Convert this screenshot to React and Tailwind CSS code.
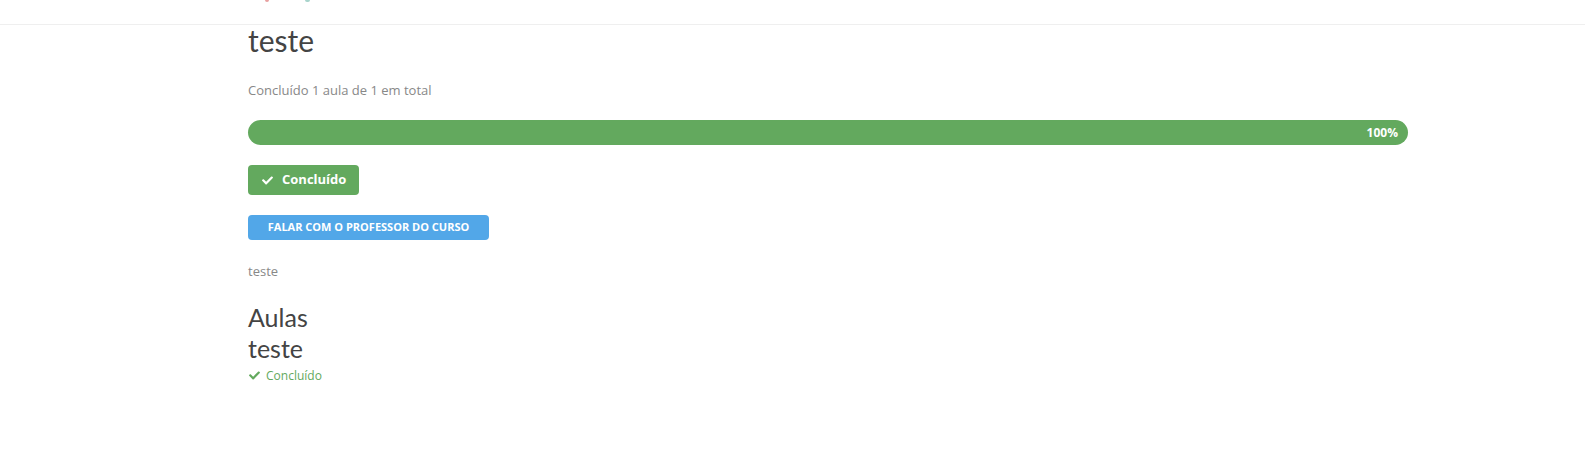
import React from "react";
import { FaCheck } from "react-icons/fa";

const heading = { fontFamily: "Lato, 'Open Sans', sans-serif" };
const body = { fontFamily: "'Open Sans', 'Liberation Sans', sans-serif" };

export default function App() {
  return (
    <div className="min-h-[457px] w-full bg-white" style={body}>
      {/* top navigation bar (scrolled, only its lower edge is visible) */}
      <header className="h-[25px] border-b border-[#efefef] bg-white">
        <div className="flex items-start pl-[265px]">
          <span className="block h-[2px] w-[4px] rounded-b-full bg-[#e8a0a0]" />
          <span className="ml-[36px] block h-[2px] w-[5px] rounded-b-full bg-[#a8d4cc]" />
        </div>
      </header>

      <main className="ml-[248px] w-[1160px]">
        <h1
          className="text-[30px] leading-[30px] font-normal text-[#444]"
          style={heading}
        >
          teste
        </h1>

        <p className="mt-[25px] text-[13px] leading-[20px] text-[#888]">
          Concluído 1 aula de 1 em total
        </p>

        <div className="mt-[20px] flex h-[25px] w-full items-center justify-end rounded-full bg-[#63a95e] pr-[10px]">
          <span className="text-[12px] font-bold text-white">100%</span>
        </div>

        <button className="mt-[20px] flex h-[30px] w-[111px] items-center gap-[9px] rounded-[4px] bg-[#63a95e] pl-[14px] text-[13px] font-bold text-white">
          <FaCheck className="h-[11px] w-[11px]" />
          <span>Concluído</span>
        </button>

        <button className="mt-[20px] flex h-[25px] w-[241px] items-center justify-center rounded-[4px] bg-[#52a7e8] text-[11px] font-bold uppercase text-white">
          Falar com o professor do curso
        </button>

        <p className="mt-[21px] text-[13px] leading-[20px] text-[#888]">teste</p>

        <h3
          className="mt-[19px] text-[25px] leading-[34px] font-normal text-[#444]"
          style={heading}
        >
          Aulas
        </h3>
        <h3
          className="text-[25px] leading-[28px] font-normal text-[#444]"
          style={heading}
        >
          teste
        </h3>

        <div className="mt-[5px] flex items-center gap-[6px] pl-[1px] text-[12px] leading-[17px] text-[#63a95e]">
          <FaCheck className="h-[11px] w-[11px]" />
          <span>Concluído</span>
        </div>
      </main>
    </div>
  );
}
